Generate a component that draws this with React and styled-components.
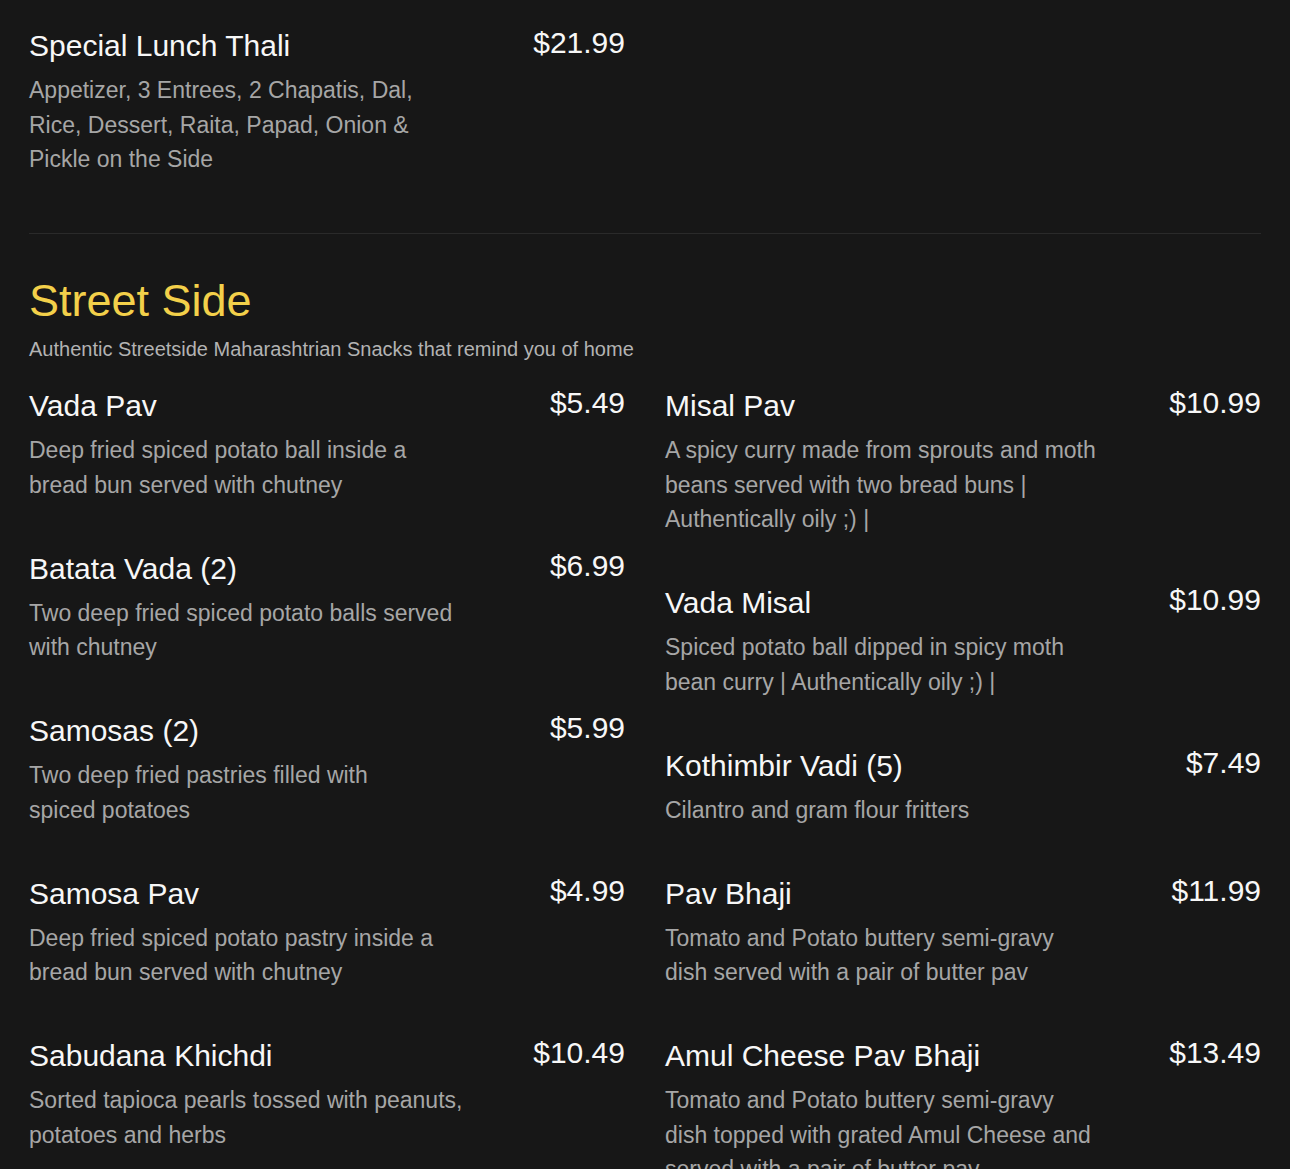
import React from "react";
import styled, { createGlobalStyle } from "styled-components";

const Global = createGlobalStyle`
  html, body { margin: 0; padding: 0; background: #171717; }
  body { font-family: "Liberation Sans", Arial, sans-serif; color: #f5f5f5; }
`;

const Page = styled.div`
  padding: 28px 29px 0;
  box-sizing: border-box;
  overflow: hidden;
  height: 1169px;
`;

const Section = styled.section`
  padding-top: ${(p) => (p.$first ? "0" : "40px")};
  padding-bottom: 8px;
  border-bottom: ${(p) => (p.$divider ? "1px solid #2a2a2a" : "none")};
`;

const Heading = styled.h2`
  margin: 0;
  font-size: 45px;
  line-height: 54px;
  font-weight: 400;
  color: #f3d04a;
`;

const Sub = styled.p`
  margin: 6px 0 24px;
  font-size: 20px;
  line-height: 30px;
  color: #b3b3b3;
`;

const Grid = styled.div`
  display: grid;
  grid-template-columns: 1fr 1fr;
  column-gap: 40px;
  align-items: start;
`;

const Column = styled.div`
  display: flex;
  flex-direction: column;
`;

const Item = styled.div`
  margin-bottom: 48.5px;
`;

const Head = styled.div`
  display: flex;
  justify-content: space-between;
  align-items: flex-start;
`;

const Name = styled.h3`
  margin: 0;
  font-size: 30px;
  line-height: 36px;
  font-weight: 400;
  color: #f7f7f7;
`;

const Price = styled.span`
  font-size: 30px;
  line-height: 30px;
  color: #f7f7f7;
`;

const Desc = styled.p`
  margin: 9px 0 0;
  max-width: 435px;
  font-size: 23px;
  line-height: 34.5px;
  color: #a6a6a6;
`;

const MenuItem = ({ name, price, desc }) => (
  <Item>
    <Head>
      <Name>{name}</Name>
      <Price>{price}</Price>
    </Head>
    {desc && <Desc>{desc}</Desc>}
  </Item>
);

const left = [
  { name: "Vada Pav", price: "$5.49", desc: "Deep fried spiced potato ball inside a bread bun served with chutney" },
  { name: "Batata Vada (2)", price: "$6.99", desc: "Two deep fried spiced potato balls served with chutney" },
  { name: "Samosas (2)", price: "$5.99", desc: "Two deep fried pastries filled with spiced\u00a0potatoes" },
  { name: "Samosa Pav", price: "$4.99", desc: "Deep fried spiced potato pastry inside a bread bun served with chutney" },
  { name: "Sabudana Khichdi", price: "$10.49", desc: "Sorted tapioca pearls tossed with peanuts, potatoes and herbs" },
];

const right = [
  { name: "Misal Pav", price: "$10.99", desc: "A spicy curry made from sprouts and moth beans served with two bread buns | Authentically oily ;) |" },
  { name: "Vada Misal", price: "$10.99", desc: "Spiced potato ball dipped in spicy moth bean curry | Authentically oily ;) |" },
  { name: "Kothimbir Vadi (5)", price: "$7.49", desc: "Cilantro and gram flour fritters" },
  { name: "Pav Bhaji", price: "$11.99", desc: "Tomato and Potato buttery semi-gravy dish served with a pair of butter pav" },
  { name: "Amul Cheese Pav Bhaji", price: "$13.49", desc: "Tomato and Potato buttery semi-gravy dish topped with grated Amul Cheese and served with a pair of butter pav" },
];

export default function App() {
  return (
    <>
      <Global />
      <Page>
        <Section $first $divider>
          <Grid>
            <Column>
              <MenuItem
                name="Special Lunch Thali"
                price="$21.99"
                desc="Appetizer, 3 Entrees, 2 Chapatis, Dal, Rice, Dessert, Raita, Papad, Onion & Pickle on the Side"
              />
            </Column>
          </Grid>
        </Section>
        <Section>
          <Heading>Street Side</Heading>
          <Sub>Authentic Streetside Maharashtrian Snacks that remind you of home</Sub>
          <Grid>
            <Column>
              {left.map((it) => (
                <MenuItem key={it.name} {...it} />
              ))}
            </Column>
            <Column>
              {right.map((it) => (
                <MenuItem key={it.name} {...it} />
              ))}
            </Column>
          </Grid>
        </Section>
      </Page>
    </>
  );
}
